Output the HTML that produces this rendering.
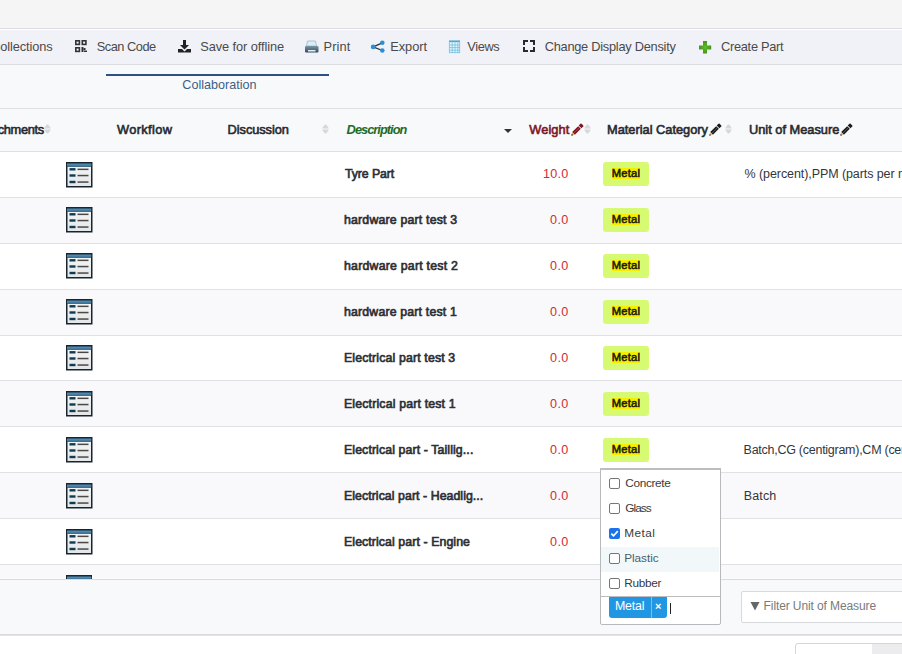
<!DOCTYPE html>
<html><head><meta charset="utf-8"><style>
html,body{margin:0;padding:0;width:902px;height:654px;overflow:hidden;background:#fff;}
body{position:relative;font-family:"Liberation Sans",sans-serif;}
.t{position:absolute;white-space:nowrap;}
.r{position:absolute;}
</style></head><body>
<div class="r" style="left:0px;top:0px;width:902px;height:28px;background:#f5f5f5;"></div>
<div class="r" style="left:0px;top:28px;width:902px;height:1px;background:#dcdcdd;"></div>
<div class="r" style="left:0px;top:29px;width:902px;height:1px;background:#ffffff;"></div>
<div class="r" style="left:0px;top:30px;width:902px;height:34px;background:#f1f2f7;"></div>
<div class="r" style="left:0px;top:64px;width:902px;height:1px;background:#dcdde1;"></div>
<div class="r" style="left:0px;top:65px;width:902px;height:43px;background:#f8f9fb;"></div>
<div class="r" style="left:0px;top:108px;width:902px;height:1px;background:#e1e2e6;"></div>
<div class="r" style="left:0px;top:109px;width:902px;height:42px;background:#f8f9fb;"></div>
<div class="r" style="left:0px;top:151px;width:902px;height:1px;background:#dfe0e4;"></div>
<div class="r" style="left:0px;top:152px;width:902px;height:45px;background:#ffffff;"></div>
<div class="r" style="left:0px;top:197px;width:902px;height:1px;background:#e0e1e4;"></div>
<div class="r" style="left:0px;top:198px;width:902px;height:45px;background:#f9f9fb;"></div>
<div class="r" style="left:0px;top:243px;width:902px;height:1px;background:#e0e1e4;"></div>
<div class="r" style="left:0px;top:244px;width:902px;height:45px;background:#ffffff;"></div>
<div class="r" style="left:0px;top:289px;width:902px;height:1px;background:#e0e1e4;"></div>
<div class="r" style="left:0px;top:290px;width:902px;height:45px;background:#f9f9fb;"></div>
<div class="r" style="left:0px;top:335px;width:902px;height:1px;background:#e0e1e4;"></div>
<div class="r" style="left:0px;top:336px;width:902px;height:44px;background:#ffffff;"></div>
<div class="r" style="left:0px;top:380px;width:902px;height:1px;background:#e0e1e4;"></div>
<div class="r" style="left:0px;top:381px;width:902px;height:45px;background:#f9f9fb;"></div>
<div class="r" style="left:0px;top:426px;width:902px;height:1px;background:#e0e1e4;"></div>
<div class="r" style="left:0px;top:427px;width:902px;height:45px;background:#ffffff;"></div>
<div class="r" style="left:0px;top:472px;width:902px;height:1px;background:#e0e1e4;"></div>
<div class="r" style="left:0px;top:473px;width:902px;height:45px;background:#f9f9fb;"></div>
<div class="r" style="left:0px;top:518px;width:902px;height:1px;background:#e0e1e4;"></div>
<div class="r" style="left:0px;top:519px;width:902px;height:45px;background:#ffffff;"></div>
<div class="r" style="left:0px;top:564px;width:902px;height:1px;background:#e0e1e4;"></div>
<div class="r" style="left:0px;top:565px;width:902px;height:13px;background:#f9f9fb;"></div>
<div class="r" style="left:0px;top:578px;width:902px;height:1px;background:#e0e1e4;"></div>
<div class="r" style="left:0px;top:578px;width:902px;height:1px;background:#fdfdfe;"></div>
<div class="r" style="left:0px;top:579px;width:902px;height:1px;background:#d9dadd;"></div>
<div class="r" style="left:0px;top:580px;width:902px;height:54px;background:#f8f9fb;"></div>
<div class="r" style="left:0px;top:634px;width:902px;height:1px;background:#dadbde;"></div>
<div class="r" style="left:0px;top:635px;width:902px;height:1px;background:#e2e3e5;"></div>
<div class="r" style="left:0px;top:636px;width:902px;height:18px;background:#ffffff;"></div>
<div class="t" style="left:96.70px;top:41.00px;font-size:12.8px;line-height:12.8px;color:#4a4a4a;font-weight:normal;font-style:normal;letter-spacing:-0.475px;">Scan Code</div>
<div class="t" style="left:200.30px;top:41.00px;font-size:12.8px;line-height:12.8px;color:#4a4a4a;font-weight:normal;font-style:normal;letter-spacing:-0.087px;">Save for offline</div>
<div class="t" style="left:323.50px;top:41.00px;font-size:12.8px;line-height:12.8px;color:#4a4a4a;font-weight:normal;font-style:normal;letter-spacing:0.125px;">Print</div>
<div class="t" style="left:390.30px;top:41.00px;font-size:12.8px;line-height:12.8px;color:#4a4a4a;font-weight:normal;font-style:normal;letter-spacing:-0.060px;">Export</div>
<div class="t" style="left:467.30px;top:41.00px;font-size:12.8px;line-height:12.8px;color:#4a4a4a;font-weight:normal;font-style:normal;letter-spacing:-0.375px;">Views</div>
<div class="t" style="left:544.70px;top:41.00px;font-size:12.8px;line-height:12.8px;color:#4a4a4a;font-weight:normal;font-style:normal;letter-spacing:-0.257px;">Change Display Density</div>
<div class="t" style="left:721.00px;top:41.00px;font-size:12.8px;line-height:12.8px;color:#4a4a4a;font-weight:normal;font-style:normal;letter-spacing:-0.280px;">Create Part</div>
<div class="t" style="left:-8.80px;top:41.00px;font-size:12.8px;line-height:12.8px;color:#4a4a4a;font-weight:normal;font-style:normal;letter-spacing:-0.120px;">Collections</div>
<svg class="r" style="left:74px;top:39px" width="14" height="14" viewBox="0 0 14 14"><g fill="none" stroke="#333" stroke-width="1.6"><rect x="1.8" y="1.8" width="3.6" height="3.6"/><rect x="8.3" y="1.8" width="3.6" height="3.6"/><rect x="1.8" y="8.8" width="3.6" height="3.6"/></g><rect x="7.5" y="8" width="2" height="5" fill="#333"/><rect x="9.5" y="9" width="2" height="2" fill="#333"/><rect x="10" y="11.5" width="3" height="1.5" fill="#333"/></svg>
<svg class="r" style="left:177px;top:39px" width="15" height="15" viewBox="0 0 15 15"><path d="M6 1h3v5h3l-4.5 4.5L3 6h3z" fill="#222"/><path d="M1 10h4l2.5 2.5L10 10h4v3.5H1z" fill="#222"/></svg>
<svg class="r" style="left:304px;top:39px" width="16" height="15" viewBox="0 0 16 15"><defs><linearGradient id="pg" x1="0" y1="0" x2="0" y2="1"><stop offset="0" stop-color="#7c98a8"/><stop offset="1" stop-color="#2f4a5a"/></linearGradient></defs><path d="M3.5 2h8l1 5h-10z" fill="#d8eef8" stroke="#9ab8c8" stroke-width="0.8"/><rect x="1" y="7" width="13.5" height="6.5" rx="1" fill="url(#pg)"/><rect x="4" y="11" width="7.5" height="1.5" fill="#e8f0f4"/></svg>
<svg class="r" style="left:370px;top:39px" width="16" height="15" viewBox="0 0 16 15"><path d="M3.2 7.9L12.3 3.8M3.2 7.9L12.3 11.5" stroke="#333" stroke-width="1.3"/><circle cx="3.2" cy="7.9" r="2.4" fill="#2b8fd0"/><circle cx="12.3" cy="3.8" r="2.3" fill="#2b8fd0"/><circle cx="12.3" cy="11.5" r="2.3" fill="#2b8fd0"/></svg>
<svg class="r" style="left:448px;top:40px" width="13" height="14" viewBox="0 0 13 14"><rect x="1" y="0.5" width="11" height="12.5" fill="#e2f6fd"/><rect x="1" y="0.5" width="11" height="1.6" fill="#4f9fc2"/><g stroke="#6fbcdc" stroke-width="0.75"><path d="M1.4 0.5v12.5M4.2 0.5v12.5M7 0.5v12.5M9.8 0.5v12.5M11.6 0.5v12.5"/><path d="M1 5h11M1 7.6h11M1 10.2h11M1 12.6h11"/></g></svg>
<svg class="r" style="left:522px;top:39px" width="14" height="14" viewBox="0 0 14 14"><g fill="none" stroke="#2a2a2a" stroke-width="2" stroke-linecap="square"><path d="M2 5V2h3M9 2h3v3M2 9v3h3M9 12h3V9"/></g></svg>
<svg class="r" style="left:698px;top:40px" width="14" height="14" viewBox="0 0 14 14"><defs><radialGradient id="gg" cx="0.5" cy="0.5" r="0.6"><stop offset="0" stop-color="#5cc020"/><stop offset="1" stop-color="#3f8a22"/></radialGradient></defs><path d="M5 1h4v4.5h4.2v4H9V13.5H5V9.5H1v-4h4z" fill="url(#gg)"/></svg>
<div class="r" style="left:106px;top:74px;width:223px;height:2px;background:#2d5180;"></div>
<div class="t" style="left:182.30px;top:79.00px;font-size:12.6px;line-height:12.6px;color:#3c5f86;font-weight:normal;font-style:normal;letter-spacing:0.000px;">Collaboration</div>
<div class="t" style="left:-23.60px;top:124.00px;font-size:12.8px;line-height:12.8px;color:#262a30;font-weight:normal;font-style:normal;letter-spacing:-0.350px;-webkit-text-stroke:0.6px #262a30;">Attachments</div>
<div class="t" style="left:117.10px;top:124.00px;font-size:12.8px;line-height:12.8px;color:#262a30;font-weight:normal;font-style:normal;letter-spacing:0.343px;-webkit-text-stroke:0.6px #262a30;">Workflow</div>
<div class="t" style="left:227.60px;top:124.00px;font-size:12.8px;line-height:12.8px;color:#262a30;font-weight:normal;font-style:normal;letter-spacing:-0.067px;-webkit-text-stroke:0.6px #262a30;">Discussion</div>
<div class="t" style="left:346.60px;top:124.00px;font-size:12.8px;line-height:12.8px;color:#1f6b28;font-weight:bold;font-style:italic;letter-spacing:-0.960px;">Description</div>
<div class="t" style="left:529.20px;top:124.00px;font-size:12.8px;line-height:12.8px;color:#7d1626;font-weight:normal;font-style:normal;letter-spacing:0.120px;-webkit-text-stroke:0.6px #7d1626;">Weight</div>
<div class="t" style="left:607.00px;top:124.00px;font-size:12.8px;line-height:12.8px;color:#262a30;font-weight:normal;font-style:normal;letter-spacing:0.000px;-webkit-text-stroke:0.6px #262a30;">Material Category</div>
<div class="t" style="left:749.00px;top:124.00px;font-size:12.8px;line-height:12.8px;color:#262a30;font-weight:normal;font-style:normal;letter-spacing:0.000px;-webkit-text-stroke:0.6px #262a30;">Unit of Measure</div>
<svg class="r" style="left:44px;top:124px" width="7" height="10" viewBox="0 0 7 10"><path d="M3.5 0.3C5.3 1.8 6.6 3.3 6.6 4.6H0.4C0.4 3.3 1.7 1.8 3.5 0.3z M3.5 9.7C5.3 8.2 6.6 6.7 6.6 5.4H0.4C0.4 6.7 1.7 8.2 3.5 9.7z" fill="#d6d8db"/></svg>
<svg class="r" style="left:322px;top:124px" width="7" height="10" viewBox="0 0 7 10"><path d="M3.5 0.3C5.3 1.8 6.6 3.3 6.6 4.6H0.4C0.4 3.3 1.7 1.8 3.5 0.3z M3.5 9.7C5.3 8.2 6.6 6.7 6.6 5.4H0.4C0.4 6.7 1.7 8.2 3.5 9.7z" fill="#d6d8db"/></svg>
<svg class="r" style="left:584px;top:124px" width="7" height="10" viewBox="0 0 7 10"><path d="M3.5 0.3C5.3 1.8 6.6 3.3 6.6 4.6H0.4C0.4 3.3 1.7 1.8 3.5 0.3z M3.5 9.7C5.3 8.2 6.6 6.7 6.6 5.4H0.4C0.4 6.7 1.7 8.2 3.5 9.7z" fill="#d6d8db"/></svg>
<svg class="r" style="left:725px;top:124px" width="7" height="10" viewBox="0 0 7 10"><path d="M3.5 0.3C5.3 1.8 6.6 3.3 6.6 4.6H0.4C0.4 3.3 1.7 1.8 3.5 0.3z M3.5 9.7C5.3 8.2 6.6 6.7 6.6 5.4H0.4C0.4 6.7 1.7 8.2 3.5 9.7z" fill="#d6d8db"/></svg>
<svg class="r" style="left:503px;top:128px" width="10" height="6" viewBox="0 0 10 6"><path d="M1 1h8L5 5z" fill="#333"/></svg>
<svg class="r" style="left:569.7px;top:123.2px" width="14" height="14" viewBox="-0.5 -1.5 17 17"><path d="M2.17 9.57L5.43 12.83L12.63 5.63L9.37 2.37z" fill="#7e1424"/><path d="M3.8 11.2L11 4" stroke="#c0485a" stroke-width="0.9"/><path d="M1.3 13.7L2.17 9.57L5.43 12.83z" fill="#e0a860"/><path d="M1.1 13.9L1.6 11.7L3.3 13.4z" fill="#222"/><path d="M10.1 1.6L12.2 -0.5Q12.9 -1.2 13.6 -0.5L15.6 1.5Q16.3 2.2 15.6 2.9L13.4 5z" fill="#7e1424"/></svg>
<svg class="r" style="left:708.3px;top:123.2px" width="14" height="14" viewBox="-0.5 -1.5 17 17"><path d="M2.17 9.57L5.43 12.83L12.63 5.63L9.37 2.37z" fill="#1c1c1c"/><path d="M3.8 11.2L11 4" stroke="#6a6a6a" stroke-width="0.9"/><path d="M1.3 13.7L2.17 9.57L5.43 12.83z" fill="#d8c090"/><path d="M1.1 13.9L1.6 11.7L3.3 13.4z" fill="#222"/><path d="M10.1 1.6L12.2 -0.5Q12.9 -1.2 13.6 -0.5L15.6 1.5Q16.3 2.2 15.6 2.9L13.4 5z" fill="#1c1c1c"/></svg>
<svg class="r" style="left:838.8px;top:123.2px" width="14" height="14" viewBox="-0.5 -1.5 17 17"><path d="M2.17 9.57L5.43 12.83L12.63 5.63L9.37 2.37z" fill="#1c1c1c"/><path d="M3.8 11.2L11 4" stroke="#6a6a6a" stroke-width="0.9"/><path d="M1.3 13.7L2.17 9.57L5.43 12.83z" fill="#d8c090"/><path d="M1.1 13.9L1.6 11.7L3.3 13.4z" fill="#222"/><path d="M10.1 1.6L12.2 -0.5Q12.9 -1.2 13.6 -0.5L15.6 1.5Q16.3 2.2 15.6 2.9L13.4 5z" fill="#1c1c1c"/></svg>
<svg class="r" style="left:65.5px;top:162px" width="27" height="26" viewBox="0 0 27 26"><defs><linearGradient id="tb" x1="0" y1="0" x2="0" y2="1"><stop offset="0" stop-color="#123c5a"/><stop offset="0.45" stop-color="#5c9cc4"/><stop offset="1" stop-color="#123c5a"/></linearGradient><linearGradient id="bd" x1="0" y1="0" x2="0" y2="1"><stop offset="0" stop-color="#f6f8f9"/><stop offset="1" stop-color="#e2e6e8"/></linearGradient></defs><rect x="0.75" y="0.75" width="25" height="24" fill="url(#bd)" stroke="#18242e" stroke-width="1.5"/><rect x="1.2" y="1.2" width="24.1" height="3.6" fill="url(#tb)"/><g fill="#0f3a50"><rect x="3.5" y="6.1" width="6" height="2.4"/><rect x="3.5" y="12.3" width="6" height="2.4"/><rect x="3.5" y="18.8" width="6" height="2.4"/></g><g fill="#4e4844"><rect x="11.5" y="6.6" width="11" height="1.5"/><rect x="11.5" y="12.8" width="11" height="1.5"/><rect x="11.5" y="19.3" width="11" height="1.5"/></g></svg>
<div class="t" style="left:345.00px;top:168.00px;font-size:12.3px;line-height:12.3px;color:#2c2f33;font-weight:normal;font-style:normal;letter-spacing:-0.088px;-webkit-text-stroke:0.65px #2c2f33;">Tyre Part</div>
<div class="t" style="left:543.00px;top:168.00px;font-size:12.6px;line-height:12.6px;color:#d42a36;font-weight:normal;font-style:normal;letter-spacing:0.233px;">10.0</div>
<div class="r" style="left:603px;top:162px;width:46px;height:24px;background:#d6fb72;border-radius:3px"></div>
<div class="r" style="left:612px;top:168px;width:28px;height:11px;background:#f6ee00;filter:blur(0.4px)"></div>
<div class="t" style="left:611.80px;top:168.00px;font-size:11.2px;line-height:11.2px;color:#1a1a10;font-weight:normal;font-style:normal;letter-spacing:0.225px;-webkit-text-stroke:0.55px #1a1a10;">Metal</div>
<div class="t" style="left:744.60px;top:168.00px;font-size:12.5px;line-height:12.5px;color:#33363a;font-weight:normal;font-style:normal;letter-spacing:-0.084px;">% (percent),PPM (parts per million)</div>
<svg class="r" style="left:65.5px;top:207px" width="27" height="26" viewBox="0 0 27 26"><defs><linearGradient id="tb" x1="0" y1="0" x2="0" y2="1"><stop offset="0" stop-color="#123c5a"/><stop offset="0.45" stop-color="#5c9cc4"/><stop offset="1" stop-color="#123c5a"/></linearGradient><linearGradient id="bd" x1="0" y1="0" x2="0" y2="1"><stop offset="0" stop-color="#f6f8f9"/><stop offset="1" stop-color="#e2e6e8"/></linearGradient></defs><rect x="0.75" y="0.75" width="25" height="24" fill="url(#bd)" stroke="#18242e" stroke-width="1.5"/><rect x="1.2" y="1.2" width="24.1" height="3.6" fill="url(#tb)"/><g fill="#0f3a50"><rect x="3.5" y="6.1" width="6" height="2.4"/><rect x="3.5" y="12.3" width="6" height="2.4"/><rect x="3.5" y="18.8" width="6" height="2.4"/></g><g fill="#4e4844"><rect x="11.5" y="6.6" width="11" height="1.5"/><rect x="11.5" y="12.8" width="11" height="1.5"/><rect x="11.5" y="19.3" width="11" height="1.5"/></g></svg>
<div class="t" style="left:344.00px;top:214.00px;font-size:12.3px;line-height:12.3px;color:#2c2f33;font-weight:normal;font-style:normal;letter-spacing:0.195px;-webkit-text-stroke:0.65px #2c2f33;">hardware part test 3</div>
<div class="t" style="left:550.10px;top:214.00px;font-size:12.6px;line-height:12.6px;color:#d42a36;font-weight:normal;font-style:normal;letter-spacing:0.300px;">0.0</div>
<div class="r" style="left:603px;top:208px;width:46px;height:24px;background:#d6fb72;border-radius:3px"></div>
<div class="r" style="left:612px;top:214px;width:28px;height:11px;background:#f6ee00;filter:blur(0.4px)"></div>
<div class="t" style="left:611.80px;top:214.00px;font-size:11.2px;line-height:11.2px;color:#1a1a10;font-weight:normal;font-style:normal;letter-spacing:0.225px;-webkit-text-stroke:0.55px #1a1a10;">Metal</div>
<svg class="r" style="left:65.5px;top:253px" width="27" height="26" viewBox="0 0 27 26"><defs><linearGradient id="tb" x1="0" y1="0" x2="0" y2="1"><stop offset="0" stop-color="#123c5a"/><stop offset="0.45" stop-color="#5c9cc4"/><stop offset="1" stop-color="#123c5a"/></linearGradient><linearGradient id="bd" x1="0" y1="0" x2="0" y2="1"><stop offset="0" stop-color="#f6f8f9"/><stop offset="1" stop-color="#e2e6e8"/></linearGradient></defs><rect x="0.75" y="0.75" width="25" height="24" fill="url(#bd)" stroke="#18242e" stroke-width="1.5"/><rect x="1.2" y="1.2" width="24.1" height="3.6" fill="url(#tb)"/><g fill="#0f3a50"><rect x="3.5" y="6.1" width="6" height="2.4"/><rect x="3.5" y="12.3" width="6" height="2.4"/><rect x="3.5" y="18.8" width="6" height="2.4"/></g><g fill="#4e4844"><rect x="11.5" y="6.6" width="11" height="1.5"/><rect x="11.5" y="12.8" width="11" height="1.5"/><rect x="11.5" y="19.3" width="11" height="1.5"/></g></svg>
<div class="t" style="left:344.00px;top:260.00px;font-size:12.3px;line-height:12.3px;color:#2c2f33;font-weight:normal;font-style:normal;letter-spacing:0.232px;-webkit-text-stroke:0.65px #2c2f33;">hardware part test 2</div>
<div class="t" style="left:550.10px;top:260.00px;font-size:12.6px;line-height:12.6px;color:#d42a36;font-weight:normal;font-style:normal;letter-spacing:0.300px;">0.0</div>
<div class="r" style="left:603px;top:254px;width:46px;height:24px;background:#d6fb72;border-radius:3px"></div>
<div class="r" style="left:612px;top:260px;width:28px;height:11px;background:#f6ee00;filter:blur(0.4px)"></div>
<div class="t" style="left:611.80px;top:260.00px;font-size:11.2px;line-height:11.2px;color:#1a1a10;font-weight:normal;font-style:normal;letter-spacing:0.225px;-webkit-text-stroke:0.55px #1a1a10;">Metal</div>
<svg class="r" style="left:65.5px;top:299px" width="27" height="26" viewBox="0 0 27 26"><defs><linearGradient id="tb" x1="0" y1="0" x2="0" y2="1"><stop offset="0" stop-color="#123c5a"/><stop offset="0.45" stop-color="#5c9cc4"/><stop offset="1" stop-color="#123c5a"/></linearGradient><linearGradient id="bd" x1="0" y1="0" x2="0" y2="1"><stop offset="0" stop-color="#f6f8f9"/><stop offset="1" stop-color="#e2e6e8"/></linearGradient></defs><rect x="0.75" y="0.75" width="25" height="24" fill="url(#bd)" stroke="#18242e" stroke-width="1.5"/><rect x="1.2" y="1.2" width="24.1" height="3.6" fill="url(#tb)"/><g fill="#0f3a50"><rect x="3.5" y="6.1" width="6" height="2.4"/><rect x="3.5" y="12.3" width="6" height="2.4"/><rect x="3.5" y="18.8" width="6" height="2.4"/></g><g fill="#4e4844"><rect x="11.5" y="6.6" width="11" height="1.5"/><rect x="11.5" y="12.8" width="11" height="1.5"/><rect x="11.5" y="19.3" width="11" height="1.5"/></g></svg>
<div class="t" style="left:344.00px;top:306.00px;font-size:12.3px;line-height:12.3px;color:#2c2f33;font-weight:normal;font-style:normal;letter-spacing:0.179px;-webkit-text-stroke:0.65px #2c2f33;">hardware part test 1</div>
<div class="t" style="left:550.10px;top:306.00px;font-size:12.6px;line-height:12.6px;color:#d42a36;font-weight:normal;font-style:normal;letter-spacing:0.300px;">0.0</div>
<div class="r" style="left:603px;top:300px;width:46px;height:24px;background:#d6fb72;border-radius:3px"></div>
<div class="r" style="left:612px;top:306px;width:28px;height:11px;background:#f6ee00;filter:blur(0.4px)"></div>
<div class="t" style="left:611.80px;top:306.00px;font-size:11.2px;line-height:11.2px;color:#1a1a10;font-weight:normal;font-style:normal;letter-spacing:0.225px;-webkit-text-stroke:0.55px #1a1a10;">Metal</div>
<svg class="r" style="left:65.5px;top:345px" width="27" height="26" viewBox="0 0 27 26"><defs><linearGradient id="tb" x1="0" y1="0" x2="0" y2="1"><stop offset="0" stop-color="#123c5a"/><stop offset="0.45" stop-color="#5c9cc4"/><stop offset="1" stop-color="#123c5a"/></linearGradient><linearGradient id="bd" x1="0" y1="0" x2="0" y2="1"><stop offset="0" stop-color="#f6f8f9"/><stop offset="1" stop-color="#e2e6e8"/></linearGradient></defs><rect x="0.75" y="0.75" width="25" height="24" fill="url(#bd)" stroke="#18242e" stroke-width="1.5"/><rect x="1.2" y="1.2" width="24.1" height="3.6" fill="url(#tb)"/><g fill="#0f3a50"><rect x="3.5" y="6.1" width="6" height="2.4"/><rect x="3.5" y="12.3" width="6" height="2.4"/><rect x="3.5" y="18.8" width="6" height="2.4"/></g><g fill="#4e4844"><rect x="11.5" y="6.6" width="11" height="1.5"/><rect x="11.5" y="12.8" width="11" height="1.5"/><rect x="11.5" y="19.3" width="11" height="1.5"/></g></svg>
<div class="t" style="left:344.00px;top:352.00px;font-size:12.3px;line-height:12.3px;color:#2c2f33;font-weight:normal;font-style:normal;letter-spacing:0.152px;-webkit-text-stroke:0.65px #2c2f33;">Electrical part test 3</div>
<div class="t" style="left:550.10px;top:352.00px;font-size:12.6px;line-height:12.6px;color:#d42a36;font-weight:normal;font-style:normal;letter-spacing:0.300px;">0.0</div>
<div class="r" style="left:603px;top:346px;width:46px;height:24px;background:#d6fb72;border-radius:3px"></div>
<div class="r" style="left:612px;top:352px;width:28px;height:11px;background:#f6ee00;filter:blur(0.4px)"></div>
<div class="t" style="left:611.80px;top:352.00px;font-size:11.2px;line-height:11.2px;color:#1a1a10;font-weight:normal;font-style:normal;letter-spacing:0.225px;-webkit-text-stroke:0.55px #1a1a10;">Metal</div>
<svg class="r" style="left:65.5px;top:391px" width="27" height="26" viewBox="0 0 27 26"><defs><linearGradient id="tb" x1="0" y1="0" x2="0" y2="1"><stop offset="0" stop-color="#123c5a"/><stop offset="0.45" stop-color="#5c9cc4"/><stop offset="1" stop-color="#123c5a"/></linearGradient><linearGradient id="bd" x1="0" y1="0" x2="0" y2="1"><stop offset="0" stop-color="#f6f8f9"/><stop offset="1" stop-color="#e2e6e8"/></linearGradient></defs><rect x="0.75" y="0.75" width="25" height="24" fill="url(#bd)" stroke="#18242e" stroke-width="1.5"/><rect x="1.2" y="1.2" width="24.1" height="3.6" fill="url(#tb)"/><g fill="#0f3a50"><rect x="3.5" y="6.1" width="6" height="2.4"/><rect x="3.5" y="12.3" width="6" height="2.4"/><rect x="3.5" y="18.8" width="6" height="2.4"/></g><g fill="#4e4844"><rect x="11.5" y="6.6" width="11" height="1.5"/><rect x="11.5" y="12.8" width="11" height="1.5"/><rect x="11.5" y="19.3" width="11" height="1.5"/></g></svg>
<div class="t" style="left:344.00px;top:398.00px;font-size:12.3px;line-height:12.3px;color:#2c2f33;font-weight:normal;font-style:normal;letter-spacing:0.171px;-webkit-text-stroke:0.65px #2c2f33;">Electrical part test 1</div>
<div class="t" style="left:550.10px;top:398.00px;font-size:12.6px;line-height:12.6px;color:#d42a36;font-weight:normal;font-style:normal;letter-spacing:0.300px;">0.0</div>
<div class="r" style="left:603px;top:392px;width:46px;height:24px;background:#d6fb72;border-radius:3px"></div>
<div class="r" style="left:612px;top:398px;width:28px;height:11px;background:#f6ee00;filter:blur(0.4px)"></div>
<div class="t" style="left:611.80px;top:398.00px;font-size:11.2px;line-height:11.2px;color:#1a1a10;font-weight:normal;font-style:normal;letter-spacing:0.225px;-webkit-text-stroke:0.55px #1a1a10;">Metal</div>
<svg class="r" style="left:65.5px;top:437px" width="27" height="26" viewBox="0 0 27 26"><defs><linearGradient id="tb" x1="0" y1="0" x2="0" y2="1"><stop offset="0" stop-color="#123c5a"/><stop offset="0.45" stop-color="#5c9cc4"/><stop offset="1" stop-color="#123c5a"/></linearGradient><linearGradient id="bd" x1="0" y1="0" x2="0" y2="1"><stop offset="0" stop-color="#f6f8f9"/><stop offset="1" stop-color="#e2e6e8"/></linearGradient></defs><rect x="0.75" y="0.75" width="25" height="24" fill="url(#bd)" stroke="#18242e" stroke-width="1.5"/><rect x="1.2" y="1.2" width="24.1" height="3.6" fill="url(#tb)"/><g fill="#0f3a50"><rect x="3.5" y="6.1" width="6" height="2.4"/><rect x="3.5" y="12.3" width="6" height="2.4"/><rect x="3.5" y="18.8" width="6" height="2.4"/></g><g fill="#4e4844"><rect x="11.5" y="6.6" width="11" height="1.5"/><rect x="11.5" y="12.8" width="11" height="1.5"/><rect x="11.5" y="19.3" width="11" height="1.5"/></g></svg>
<div class="t" style="left:344.00px;top:444.00px;font-size:12.3px;line-height:12.3px;color:#2c2f33;font-weight:normal;font-style:normal;letter-spacing:0.115px;-webkit-text-stroke:0.65px #2c2f33;">Electrical part - Taillig...</div>
<div class="t" style="left:550.10px;top:444.00px;font-size:12.6px;line-height:12.6px;color:#d42a36;font-weight:normal;font-style:normal;letter-spacing:0.300px;">0.0</div>
<div class="r" style="left:603px;top:438px;width:46px;height:24px;background:#d6fb72;border-radius:3px"></div>
<div class="r" style="left:612px;top:444px;width:28px;height:11px;background:#f6ee00;filter:blur(0.4px)"></div>
<div class="t" style="left:611.80px;top:444.00px;font-size:11.2px;line-height:11.2px;color:#1a1a10;font-weight:normal;font-style:normal;letter-spacing:0.225px;-webkit-text-stroke:0.55px #1a1a10;">Metal</div>
<div class="t" style="left:743.60px;top:444.00px;font-size:12.5px;line-height:12.5px;color:#33363a;font-weight:normal;font-style:normal;letter-spacing:-0.265px;">Batch,CG (centigram),CM (centimeter)</div>
<svg class="r" style="left:65.5px;top:483px" width="27" height="26" viewBox="0 0 27 26"><defs><linearGradient id="tb" x1="0" y1="0" x2="0" y2="1"><stop offset="0" stop-color="#123c5a"/><stop offset="0.45" stop-color="#5c9cc4"/><stop offset="1" stop-color="#123c5a"/></linearGradient><linearGradient id="bd" x1="0" y1="0" x2="0" y2="1"><stop offset="0" stop-color="#f6f8f9"/><stop offset="1" stop-color="#e2e6e8"/></linearGradient></defs><rect x="0.75" y="0.75" width="25" height="24" fill="url(#bd)" stroke="#18242e" stroke-width="1.5"/><rect x="1.2" y="1.2" width="24.1" height="3.6" fill="url(#tb)"/><g fill="#0f3a50"><rect x="3.5" y="6.1" width="6" height="2.4"/><rect x="3.5" y="12.3" width="6" height="2.4"/><rect x="3.5" y="18.8" width="6" height="2.4"/></g><g fill="#4e4844"><rect x="11.5" y="6.6" width="11" height="1.5"/><rect x="11.5" y="12.8" width="11" height="1.5"/><rect x="11.5" y="19.3" width="11" height="1.5"/></g></svg>
<div class="t" style="left:344.00px;top:490.00px;font-size:12.3px;line-height:12.3px;color:#2c2f33;font-weight:normal;font-style:normal;letter-spacing:0.070px;-webkit-text-stroke:0.65px #2c2f33;">Electrical part - Headlig...</div>
<div class="t" style="left:550.10px;top:490.00px;font-size:12.6px;line-height:12.6px;color:#d42a36;font-weight:normal;font-style:normal;letter-spacing:0.300px;">0.0</div>
<div class="t" style="left:743.80px;top:490.00px;font-size:12.5px;line-height:12.5px;color:#33363a;font-weight:normal;font-style:normal;letter-spacing:0.125px;">Batch</div>
<svg class="r" style="left:65.5px;top:529px" width="27" height="26" viewBox="0 0 27 26"><defs><linearGradient id="tb" x1="0" y1="0" x2="0" y2="1"><stop offset="0" stop-color="#123c5a"/><stop offset="0.45" stop-color="#5c9cc4"/><stop offset="1" stop-color="#123c5a"/></linearGradient><linearGradient id="bd" x1="0" y1="0" x2="0" y2="1"><stop offset="0" stop-color="#f6f8f9"/><stop offset="1" stop-color="#e2e6e8"/></linearGradient></defs><rect x="0.75" y="0.75" width="25" height="24" fill="url(#bd)" stroke="#18242e" stroke-width="1.5"/><rect x="1.2" y="1.2" width="24.1" height="3.6" fill="url(#tb)"/><g fill="#0f3a50"><rect x="3.5" y="6.1" width="6" height="2.4"/><rect x="3.5" y="12.3" width="6" height="2.4"/><rect x="3.5" y="18.8" width="6" height="2.4"/></g><g fill="#4e4844"><rect x="11.5" y="6.6" width="11" height="1.5"/><rect x="11.5" y="12.8" width="11" height="1.5"/><rect x="11.5" y="19.3" width="11" height="1.5"/></g></svg>
<div class="t" style="left:344.00px;top:536.00px;font-size:12.3px;line-height:12.3px;color:#2c2f33;font-weight:normal;font-style:normal;letter-spacing:0.096px;-webkit-text-stroke:0.65px #2c2f33;">Electrical part - Engine</div>
<div class="t" style="left:550.10px;top:536.00px;font-size:12.6px;line-height:12.6px;color:#d42a36;font-weight:normal;font-style:normal;letter-spacing:0.300px;">0.0</div>
<div class="r" style="left:65px;top:575px;width:27px;height:4px;overflow:hidden"><svg style="position:absolute;left:0.5px;top:0px" width="27" height="26" viewBox="0 0 27 26"><defs><linearGradient id="tb" x1="0" y1="0" x2="0" y2="1"><stop offset="0" stop-color="#123c5a"/><stop offset="0.45" stop-color="#5c9cc4"/><stop offset="1" stop-color="#123c5a"/></linearGradient><linearGradient id="bd" x1="0" y1="0" x2="0" y2="1"><stop offset="0" stop-color="#f6f8f9"/><stop offset="1" stop-color="#e2e6e8"/></linearGradient></defs><rect x="0.75" y="0.75" width="25" height="24" fill="url(#bd)" stroke="#18242e" stroke-width="1.5"/><rect x="1.2" y="1.2" width="24.1" height="3.6" fill="url(#tb)"/><g fill="#0f3a50"><rect x="3.5" y="6.1" width="6" height="2.4"/><rect x="3.5" y="12.3" width="6" height="2.4"/><rect x="3.5" y="18.8" width="6" height="2.4"/></g><g fill="#4e4844"><rect x="11.5" y="6.6" width="11" height="1.5"/><rect x="11.5" y="12.8" width="11" height="1.5"/><rect x="11.5" y="19.3" width="11" height="1.5"/></g></svg>
</div>
<div class="r" style="left:741px;top:591px;width:200px;height:32px;background:#ffffff;border:1px solid #d8d9dc;box-sizing:border-box;border-radius:2px"></div>
<svg class="r" style="left:750px;top:601px" width="10" height="10" viewBox="0 0 10 10"><path d="M0.5 1h9L5 9.5z" fill="#666"/></svg>
<div class="t" style="left:763.60px;top:600.00px;font-size:12px;line-height:12px;color:#7a7a7a;font-weight:normal;font-style:normal;letter-spacing:-0.105px;">Filter Unit of Measure</div>
<div class="r" style="left:795px;top:643px;width:120px;height:20px;background:#ffffff;border:1px solid #d5d5d8;border-radius:3px;box-sizing:border-box"></div>
<div class="r" style="left:872px;top:644px;width:40px;height:20px;background:#ececee;"></div>
<div class="r" style="left:600px;top:469px;width:121px;height:156px;background:#ffffff;border:1px solid #b8b9bc;box-sizing:border-box;border-radius:0 0 2px 2px"></div>
<div class="r" style="left:600px;top:468px;width:121px;height:2px;background:#bdbdbf;"></div>
<div class="r" style="left:601px;top:547px;width:118px;height:25px;background:#f2f7fa;"></div>
<div class="r" style="left:601px;top:596px;width:119px;height:1px;background:#bcbcbe;"></div>
<svg class="r" style="left:609px;top:478px" width="11" height="11" viewBox="0 0 11 11"><rect x="0.5" y="0.5" width="10" height="10" rx="1.5" fill="#fff" stroke="#767676" stroke-width="1"/></svg>
<div class="t" style="left:625.20px;top:478.00px;font-size:11.8px;line-height:11.8px;color:#3a3a3a;font-weight:normal;font-style:normal;letter-spacing:-0.314px;">Concrete</div>
<svg class="r" style="left:609px;top:503px" width="11" height="11" viewBox="0 0 11 11"><rect x="0.5" y="0.5" width="10" height="10" rx="1.5" fill="#fff" stroke="#767676" stroke-width="1"/></svg>
<div class="t" style="left:625.20px;top:503.00px;font-size:11.8px;line-height:11.8px;color:#3a3a3a;font-weight:normal;font-style:normal;letter-spacing:-0.900px;">Glass</div>
<svg class="r" style="left:609px;top:528px" width="11" height="11" viewBox="0 0 11 11"><rect x="0" y="0" width="11" height="11" rx="2" fill="#1a73e8"/><path d="M2.3 5.6L4.5 7.8L8.8 3.2" fill="none" stroke="#fff" stroke-width="1.7"/></svg>
<div class="t" style="left:624.20px;top:528.00px;font-size:11.8px;line-height:11.8px;color:#3a3a3a;font-weight:normal;font-style:normal;letter-spacing:0.450px;">Metal</div>
<svg class="r" style="left:609px;top:553px" width="11" height="11" viewBox="0 0 11 11"><rect x="0.5" y="0.5" width="10" height="10" rx="1.5" fill="#fff" stroke="#767676" stroke-width="1"/></svg>
<div class="t" style="left:624.20px;top:553.00px;font-size:11.8px;line-height:11.8px;color:#4b5d6c;font-weight:normal;font-style:normal;letter-spacing:-0.050px;">Plastic</div>
<svg class="r" style="left:609px;top:578px" width="11" height="11" viewBox="0 0 11 11"><rect x="0.5" y="0.5" width="10" height="10" rx="1.5" fill="#fff" stroke="#767676" stroke-width="1"/></svg>
<div class="t" style="left:624.20px;top:578.00px;font-size:11.8px;line-height:11.8px;color:#3a3a3a;font-weight:normal;font-style:normal;letter-spacing:-0.280px;">Rubber</div>
<div class="r" style="left:609px;top:597px;width:58px;height:21px;background:#2196e3;border-radius:0 0 3px 3px"></div>
<div class="r" style="left:651px;top:597px;width:1px;height:21px;background:#7cc0ef;"></div>
<div class="t" style="left:614.90px;top:600.00px;font-size:12.4px;line-height:12.4px;color:#ffffff;font-weight:normal;font-style:normal;letter-spacing:-0.175px;">Metal</div>
<div class="t" style="left:655.00px;top:601.00px;font-size:11px;line-height:11px;color:#ffffff;font-weight:bold;font-style:normal;">×</div>
<div class="r" style="left:670px;top:603px;width:1px;height:11px;background:#222;"></div>
</body></html>
